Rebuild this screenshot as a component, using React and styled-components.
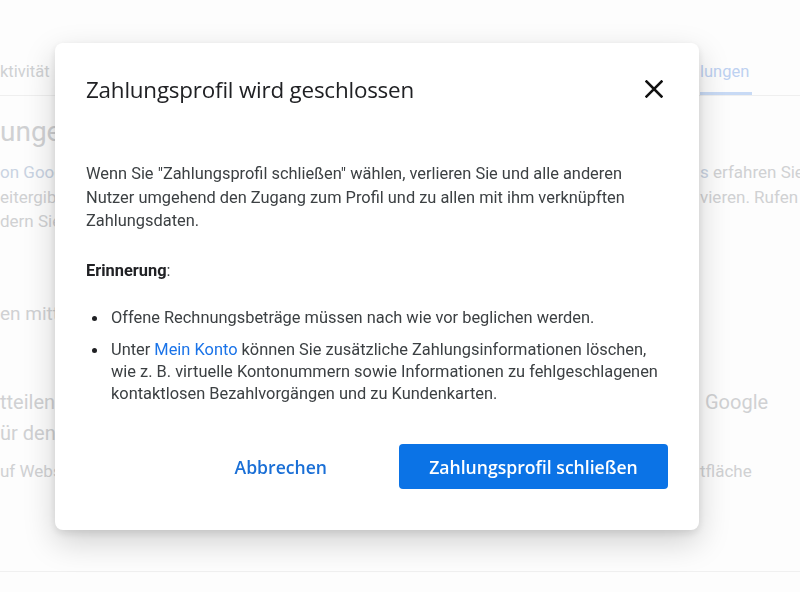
import React from 'react'
import styled, { createGlobalStyle } from 'styled-components'

const GlobalStyle = createGlobalStyle`
    html, body {
        margin: 0;
        padding: 0;
        background: #fdfdfd;
        font-family: Roboto, "Liberation Sans", sans-serif;
        overflow: hidden;
    }
`

const Page = styled.div`
    width: 800px;
    height: 592px;
    display: flex;
    flex-direction: column;
    overflow: hidden;
`

const TabBar = styled.div`
    display: grid;
    grid-template-columns: 700px 1fr;
    height: 95px;
    border-bottom: 1px solid #efefef;
    align-items: end;
`

const Tab = styled.div`
    font-size: 16.5px;
    height: 40px;
    line-height: 40px;
    color: ${p => (p.active ? '#bdd1f1' : '#cfd1d3')};
    width: ${p => (p.active ? '52px' : 'auto')};
    border-bottom: 3px solid ${p => (p.active ? '#c8daf5' : 'transparent')};
    box-sizing: content-box;
`

const Row = styled.div`
    display: grid;
    grid-template-columns: 700px 1fr;
    margin-top: ${p => p.mt}px;
    font-size: ${p => p.size}px;
    line-height: ${p => p.lh}px;
    color: #d0d1d3;
    white-space: nowrap;
`

const Muted = styled.span`
    color: ${p => p.tint || 'inherit'};
`

const Divider = styled.div`
    margin-top: ${p => p.mt}px;
    border-top: 1px solid #f0f0f0;
`

const Overlay = styled.div`
    position: fixed;
    inset: 0;
    padding: 43px 0 0 55px;
    box-sizing: border-box;
`

const Dialog = styled.div`
    width: 644px;
    height: 487px;
    box-sizing: border-box;
    background: #fff;
    border-radius: 8px;
    box-shadow: 0 12px 32px rgba(0, 0, 0, 0.18), 0 3px 8px rgba(0, 0, 0, 0.1);
    padding: 26px 31px 41px 31px;
    display: flex;
    flex-direction: column;
`

const Header = styled.div`
    display: flex;
    align-items: center;
    justify-content: space-between;
    height: 40px;
`

const Title = styled.h2`
    margin: 0;
    font-family: "Open Sans", "Noto Sans", sans-serif;
    font-weight: 400;
    font-size: 22.4px;
    color: #202124;
    letter-spacing: -0.2px;
`

const CloseButton = styled.button`
    border: 0;
    background: none;
    padding: 0;
    width: 24px;
    height: 24px;
    margin-right: 2px;
    display: flex;
    align-items: center;
    justify-content: center;
    cursor: pointer;
`

const Body = styled.div`
    margin-top: 53px;
    font-size: 16.4px;
    color: #3c4043;
`

const Paragraph = styled.p`
    margin: 0;
    line-height: 23.5px;
`

const Label = styled.p`
    margin: 26px 0 0;
    line-height: 23.5px;
    strong {
        font-weight: 700;
        color: #202124;
    }
`

const List = styled.ul`
    margin: 25px 0 0;
    padding: 0 0 0 6px;
    list-style: none;
    display: flex;
    flex-direction: column;
    gap: 10px;
    line-height: 22px;
`

const Item = styled.li`
    display: grid;
    grid-template-columns: 19px 1fr;
    align-items: start;
`

const Bullet = styled.span`
    width: 5px;
    height: 5px;
    margin-top: 9px;
    border-radius: 50%;
    background: #202124;
`

const Link = styled.a`
    color: #1a73e8;
    text-decoration: none;
`

const Footer = styled.div`
    margin-top: auto;
    display: flex;
    justify-content: flex-end;
    align-items: center;
    gap: 48px;
`

const Button = styled.button`
    height: 45px;
    border: 0;
    border-radius: 4px;
    font-family: "Open Sans", "Noto Sans", sans-serif;
    font-size: 17.6px;
    font-weight: 600;
    padding: ${p => (p.primary ? '0 28px' : '0 24px')};
    width: ${p => (p.primary ? '269px' : 'auto')};
    background: ${p => (p.primary ? '#0b73e6' : 'transparent')};
    color: ${p => (p.primary ? '#fff' : '#1a6fd6')};
    cursor: pointer;
`

const CloseIcon = () => (
    <svg width="18" height="18" viewBox="0 0 18 18">
        <path d="M1.5 1.5 L16.5 16.5 M16.5 1.5 L1.5 16.5" stroke="#111" strokeWidth="2.5" strokeLinecap="square" />
    </svg>
)

const Background = () => (
    <Page>
        <TabBar>
            <Tab>ktivität</Tab>
            <Tab active>lungen</Tab>
        </TabBar>
        <Row mt={18} size={28} lh={36}>
            <div>ungen</div>
            <div />
        </Row>
        <Row mt={10} size={17} lh={24.5}>
            <div>
                <Muted tint="#c9d3e2">on Google</Muted><br />
                eitergibt<br />
                dern Sie
            </div>
            <div>
                <Muted tint="#c9d3e2">s</Muted> erfahren Sie<br />
                vieren. Rufen
            </div>
        </Row>
        <Row mt={67} size={19} lh={26}>
            <div>en mittels</div>
            <div />
        </Row>
        <Row mt={60} size={20} lh={31}>
            <div>
                tteilen<br />
                ür den
            </div>
            <div>&nbsp;Google</div>
        </Row>
        <Row mt={10} size={17} lh={24}>
            <div>uf Websites</div>
            <div>tfläche</div>
        </Row>
        <Divider mt={88} />
    </Page>
)

const App = () => (
    <>
        <GlobalStyle />
        <Background />
        <Overlay>
            <Dialog role="dialog">
                <Header>
                    <Title>Zahlungsprofil wird geschlossen</Title>
                    <CloseButton aria-label="Schließen">
                        <CloseIcon />
                    </CloseButton>
                </Header>
                <Body>
                    <Paragraph>
                        Wenn Sie "Zahlungsprofil schließen" wählen, verlieren Sie und alle anderen
                        Nutzer umgehend den Zugang zum Profil und zu allen mit ihm verknüpften
                        Zahlungsdaten.
                    </Paragraph>
                    <Label><strong>Erinnerung</strong>:</Label>
                    <List>
                        <Item>
                            <Bullet />
                            <span>Offene Rechnungsbeträge müssen nach wie vor beglichen werden.</span>
                        </Item>
                        <Item>
                            <Bullet />
                            <span>
                                Unter <Link href="#">Mein Konto</Link> können Sie zusätzliche Zahlungsinformationen löschen,
                                wie z. B. virtuelle Kontonummern sowie Informationen zu fehlgeschlagenen
                                kontaktlosen Bezahlvorgängen und zu Kundenkarten.
                            </span>
                        </Item>
                    </List>
                </Body>
                <Footer>
                    <Button>Abbrechen</Button>
                    <Button primary>Zahlungsprofil schließen</Button>
                </Footer>
            </Dialog>
        </Overlay>
    </>
)

export default App
